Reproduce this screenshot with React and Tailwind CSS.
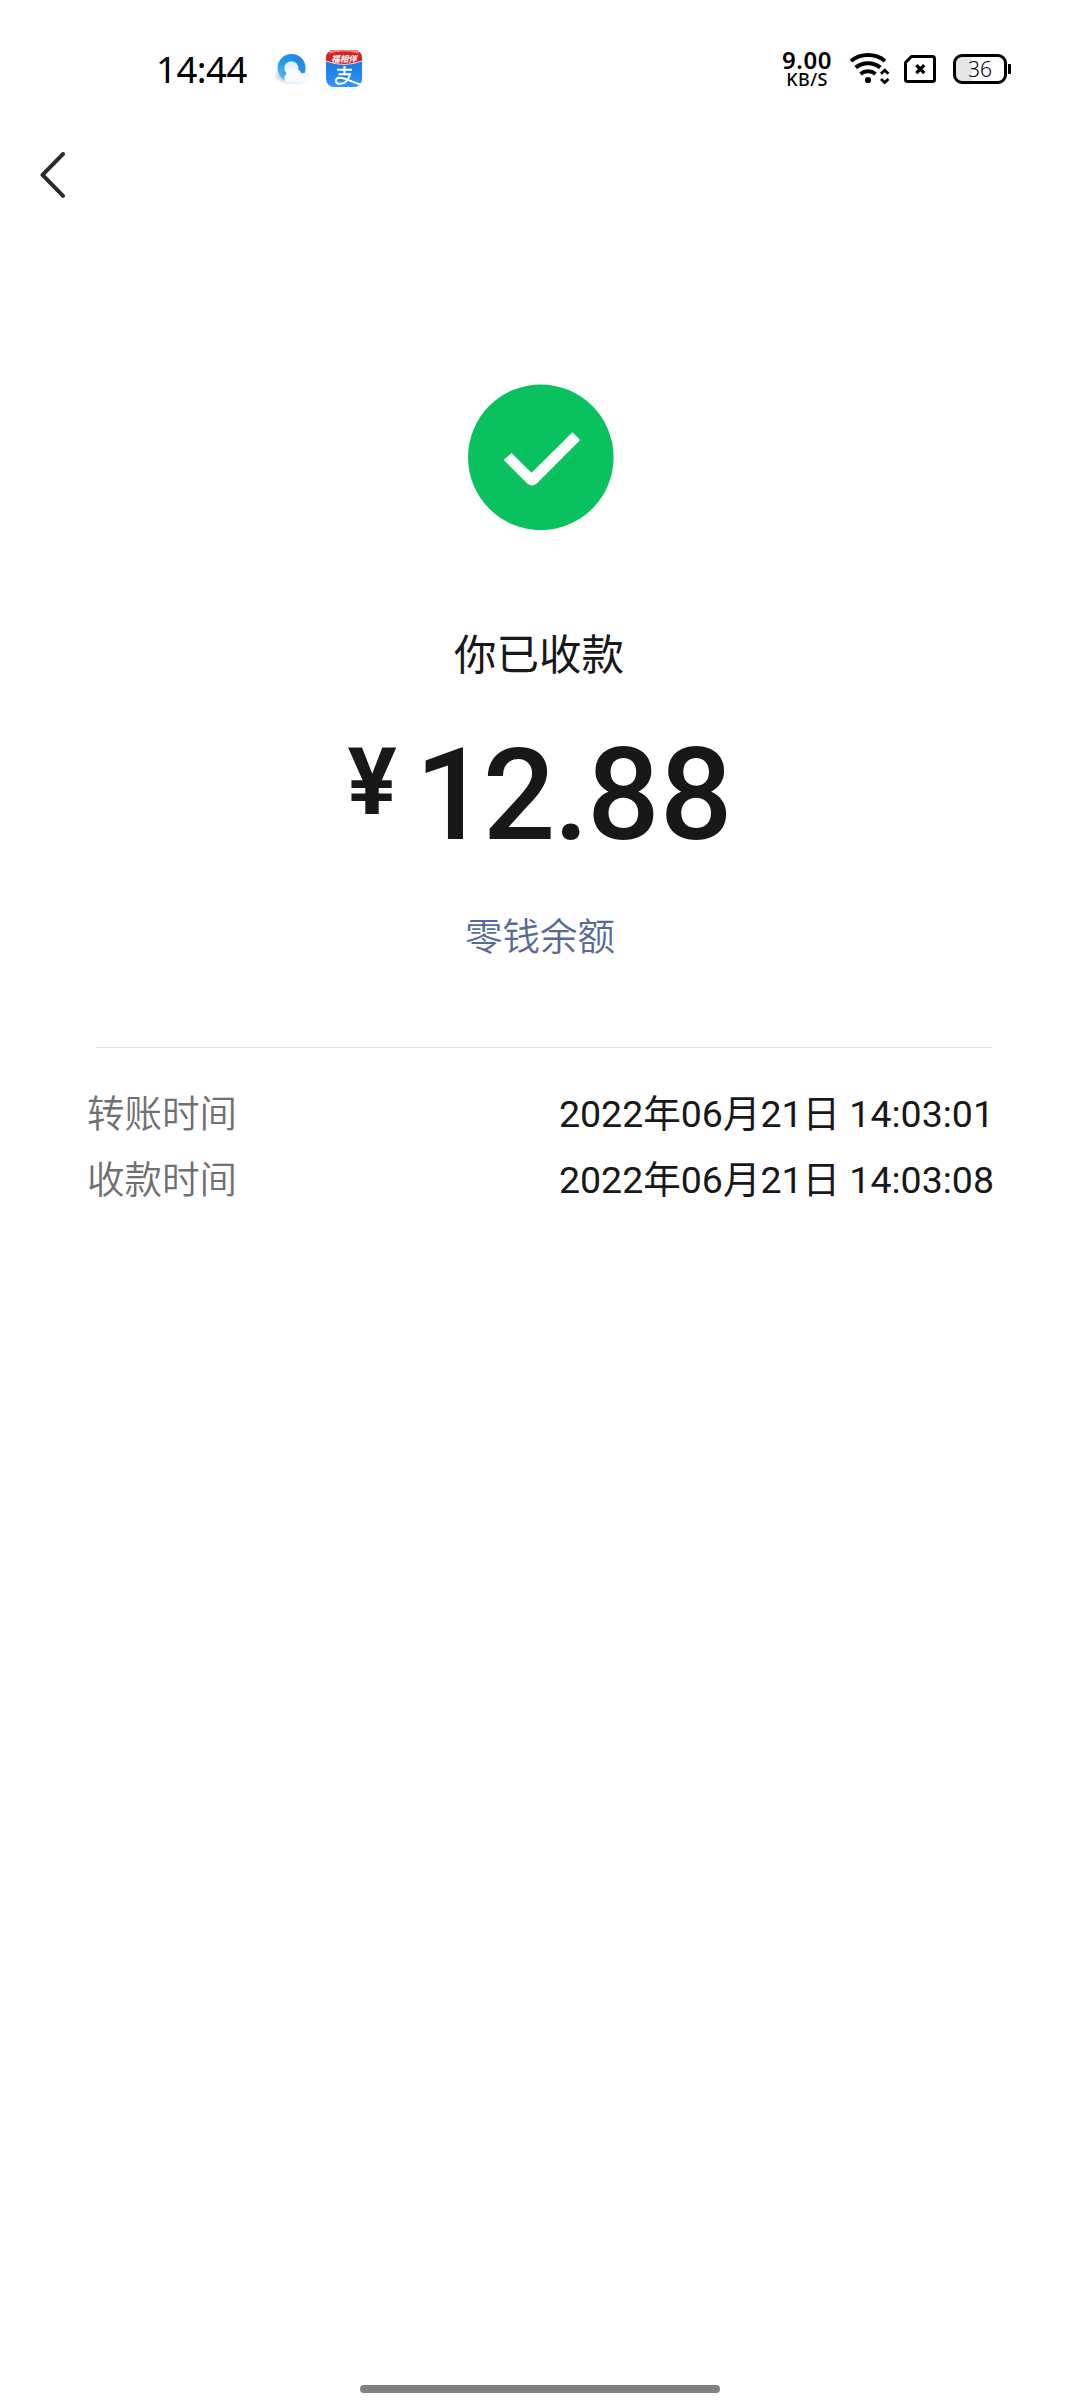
import React from "react";

function BrowserIcon() {
  return (
    <svg width="40" height="36" viewBox="0 0 40 36" className="shrink-0">
      <defs>
        <linearGradient id="ring" x1="1" y1="0" x2="0.1" y2="1">
          <stop offset="0" stopColor="#1b7fe2" />
          <stop offset="0.6" stopColor="#2b9ae8" />
          <stop offset="1" stopColor="#6cc0f3" />
        </linearGradient>
        <linearGradient id="cloud" x1="0" y1="0" x2="0" y2="1">
          <stop offset="0" stopColor="#d5ecfb" />
          <stop offset="1" stopColor="#ffffff" />
        </linearGradient>
        <filter id="soft" x="-30%" y="-30%" width="160%" height="160%">
          <feGaussianBlur stdDeviation="1.6" />
        </filter>
      </defs>
      <path d="M4 27a6 6 0 0 1 7-8h17a7 7 0 0 1 7 10c-6 5-26 4-31-2z" fill="#b9cfe4" opacity="0.7" filter="url(#soft)" />
      <circle cx="19.500" cy="17" r="14" fill="url(#ring)" />
      <circle cx="19.300" cy="17.300" r="7" fill="url(#cloud)" />
      <path d="M15 31a4.500 4.500 0 0 1-.5-8c1-4 5-6.500 9-5.500 3 .5 5 2.500 6 5a4.500 4.500 0 0 1 4 8.500z" fill="#f8fbfe" />
    </svg>
  );
}

function AlipayIcon() {
  return (
    <svg width="36" height="37" viewBox="0 0 36 37" className="-mt-px ml-[14px] shrink-0">
      <defs>
        <linearGradient id="pay" x1="0" y1="0" x2="0" y2="1">
          <stop offset="0" stopColor="#1467dc" />
          <stop offset="1" stopColor="#2f97f7" />
        </linearGradient>
        <clipPath id="tile">
          <rect width="36" height="37" rx="8" />
        </clipPath>
      </defs>
      <g clipPath="url(#tile)">
        <rect width="36" height="37" fill="url(#pay)" />
        <path d="M0 0h36v11Q18 18 0 11z" fill="#d3222b" />
        <path d="M3 0h30v3.500Q18-.5 3 3.500z" fill="#e88a6c" />
        <path d="M0 11Q18 18 36 11" fill="none" stroke="#f2d6d8" strokeWidth="1" />
        <text x="18" y="11.500" textAnchor="middle" fontSize="8.500" fontWeight="700" fontStyle="italic" fill="#fff" fontFamily="Noto Sans CJK SC, sans-serif">福相伴</text>
        <path d="M11 19.800h15M18.500 16v8.500M12.500 24.300h11.500c-1.500 5-5 9.500-9.500 9.500-6 0-6-6-1-6 5.500 0 12 4 22.500 7.200" fill="none" stroke="#fff" strokeWidth="2.100" />
      </g>
    </svg>
  );
}

function WifiIcon() {
  return (
    <svg width="40" height="34" viewBox="0 0 40 34" fill="none" stroke="#000" className="ml-[17px] shrink-0">
      <g strokeWidth="4">
        <path d="M1 9A27.500 27.500 0 0 1 35 9" />
        <path d="M5.700 15.500A20 20 0 0 1 30.300 15.500" />
        <path d="M10.500 22A12 12 0 0 1 25.500 22" />
      </g>
      <circle cx="18" cy="28" r="3.100" fill="#000" stroke="none" />
      <path d="M31 21.800l3.700-3.500 3.700 3.500M31 27l3.700 3.500 3.700-3.500" strokeWidth="2.800" />
    </svg>
  );
}

function SimIcon() {
  return (
    <svg width="32" height="28" viewBox="0 0 32 28" fill="none" stroke="#000" strokeWidth="3" className="ml-[14px] shrink-0">
      <path d="M7.500 1.500H28.500a2 2 0 0 1 2 2v21a2 2 0 0 1-2 2H3.500a2 2 0 0 1-2-2V7.500z" strokeLinejoin="round" />
      <path d="M12.300 10.200l8 8M20.300 10.200l-8 8" strokeWidth="3.200" />
    </svg>
  );
}

function Battery() {
  return (
    <div className="ml-[17px] flex items-center">
      <div className="flex h-[30px] w-[54px] items-center justify-center rounded-[9px] border-[3px] border-black bg-[linear-gradient(90deg,#e6e6e6_34%,#ffffff_34%)] font-['Noto_Sans',sans-serif] text-[21px] font-light leading-[24px] text-black">
        36
      </div>
      <div className="ml-px h-[10px] w-[3px] rounded-r-[1px] bg-black" />
    </div>
  );
}

function StatusBar() {
  return (
    <header className="flex h-[138px] items-center justify-between pl-[156px] pr-[69px]">
      <div className="flex items-center">
        <span className="w-[116px] font-['Noto_Sans',sans-serif] text-[36.500px] leading-[50px] tracking-[-0.500px] text-black">14:44</span>
        <BrowserIcon />
        <AlipayIcon />
      </div>
      <div className="flex items-center">
        <div className="flex w-[52px] flex-col items-center font-['Noto_Sans',sans-serif] text-black">
          <span className="text-[24px] font-semibold leading-[20px] tracking-[0.600px]">9.00</span>
          <span className="text-[18px] font-medium leading-[19px] tracking-[0.400px]">KB/S</span>
        </div>
        <WifiIcon />
        <SimIcon />
        <Battery />
      </div>
    </header>
  );
}

function DetailRow({ label, value }) {
  return (
    <div className="flex h-[66px] items-center justify-between">
      <span className="ml-px font-[350] text-[#707070]">{label}</span>
      <span className="text-[#181818]">{value}</span>
    </div>
  );
}

export default function App() {
  return (
    <div className="flex h-[2400px] w-[1080px] flex-col bg-white font-['Roboto','Noto_Sans_CJK_SC',sans-serif]">
      <StatusBar />
      <nav className="flex h-[74px] items-center pl-[40px]">
        <svg width="26" height="46" viewBox="0 0 26 46" fill="none" stroke="#2c2c2c" strokeWidth="4" strokeLinecap="round" strokeLinejoin="round">
          <path d="M23 2L2.500 22.800 23 43.800" />
        </svg>
      </nav>
      <main className="flex flex-col items-center pt-[172px]">
        <svg width="146" height="146" viewBox="0 0 146 146" className="ml-px">
          <circle cx="72.800" cy="73.300" r="72.800" fill="#0ac160" />
          <path d="M35.800 76l7.700-7 20 19.700 41-40.400 7.700 7.700-43.700 43.700q-4.500 3.500-9 0z" fill="#fff" />
        </svg>
        <h1 className="mr-[2px] mt-[96px] text-[42.500px] leading-[60px] text-[#181818]">你已收款</h1>
        <div className="mt-[34px] flex items-start text-[#181818]">
          <span className="mt-[13px] text-[92px] font-bold leading-[100px]">¥</span>
          <span className="ml-[18px] text-[128px] font-medium leading-[150px]">
            <span className="tracking-[-5px]">1</span><span className="tracking-[-2px]">2.</span>88
          </span>
        </div>
        <p className="mt-[40px] text-[37.500px] font-[350] leading-[54px] text-[#576b95]">零钱余额</p>
      </main>
      <section className="mt-[83px] pl-[86px] pr-[86px] text-[37.500px]">
        <div className="ml-[10px] mr-[2px] h-px bg-[#e3e3e3]" />
        <div className="mt-[33px]">
          <DetailRow label="转账时间" value="2022年06月21日 14:03:01" />
          <DetailRow label="收款时间" value="2022年06月21日 14:03:08" />
        </div>
      </section>
      <div className="mb-[7px] mt-auto h-[8px] w-[360px] self-center rounded-full bg-[#808080]" />
    </div>
  );
}
